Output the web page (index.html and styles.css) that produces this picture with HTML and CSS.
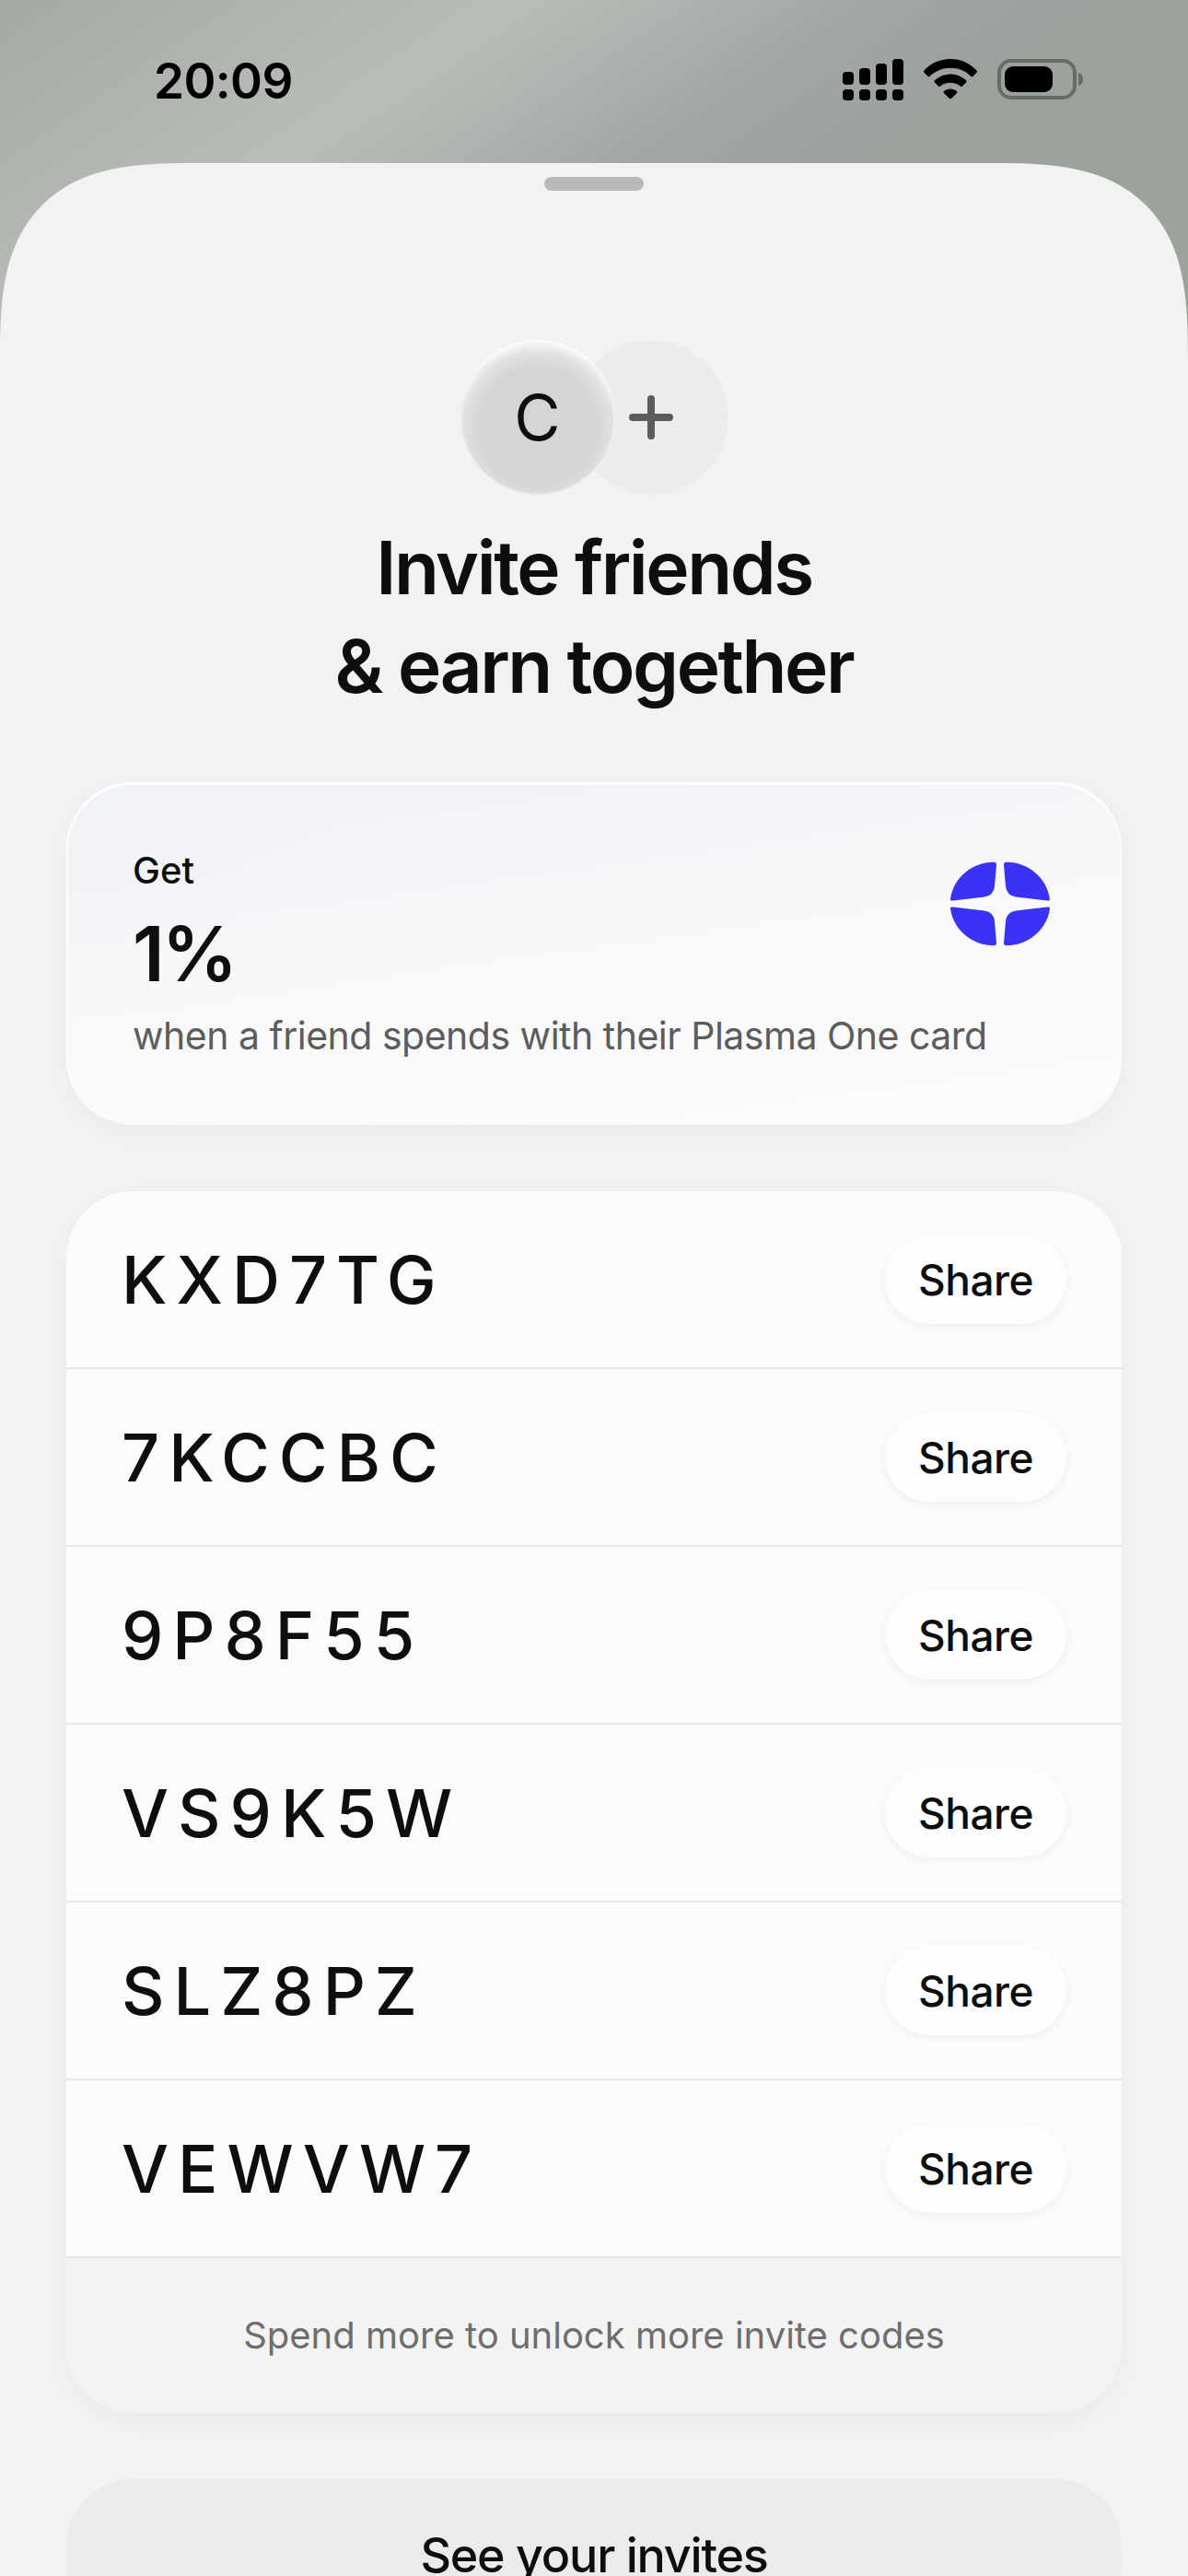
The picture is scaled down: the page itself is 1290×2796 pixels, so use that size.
FILE: index.html
```html
<!DOCTYPE html>
<html lang="en">
<head>
<meta charset="utf-8">
<title>Invite friends</title>
<link rel="stylesheet" href="styles.css">
</head>
<body>
<div class="screen">
  <header class="status">
    <span class="time">20:09</span>
    <div class="status-icons">
      <svg class="signal" width="66" height="46" viewBox="0 0 66 46" fill="#000">
        <rect x="0" y="14" width="12" height="14" rx="4"/><rect x="18" y="10" width="12" height="18" rx="4"/><rect x="36" y="5" width="12" height="23" rx="4"/><rect x="54" y="0" width="12" height="28" rx="4"/>
        <rect x="0" y="33" width="12" height="12" rx="4"/><rect x="18" y="33" width="12" height="12" rx="4"/><rect x="36" y="33" width="12" height="12" rx="4"/><rect x="54" y="33" width="12" height="12" rx="4"/>
      </svg>
      <svg class="wifi" width="58" height="43" viewBox="0 0 58 43" fill="#000">
        <path d="M29 0C40 0 50 4.500 57.500 12.500Q58.500 13.600 57.500 14.700L53.500 18.700Q52.400 19.800 51.200 18.700C45.500 13 37.500 9.800 29 9.800S12.500 13 6.800 18.700Q5.600 19.800 4.500 18.700L.5 14.700Q-.5 13.600 .5 12.500C8 4.500 18 0 29 0Z"/>
        <path d="M29 16.500C35.500 16.500 41.500 19 46 23.300Q47 24.300 46 25.400L42 29.400Q41 30.400 39.800 29.500C36.800 27 33 25.800 29 25.800S21.200 27 18.200 29.500Q17 30.400 16 29.400L12 25.400Q11 24.300 12 23.300C16.500 19 22.500 16.500 29 16.500Z"/>
        <path d="M29 32.500C31.700 32.500 34.200 33.400 36 35Q37 36 36 37L30.500 42.400Q29 43.400 27.500 42.400L22 37Q21 36 22 35C23.800 33.400 26.300 32.500 29 32.500Z"/>
      </svg>
      <svg class="battery" width="94" height="44" viewBox="0 0 94 44">
        <rect x="2" y="2" width="82" height="40" rx="13" fill="none" stroke="#686c67" stroke-width="4"/>
        <rect x="8" y="8" width="52" height="28" rx="9" fill="#000"/>
        <path d="M88 15Q93 16 93 22T88 29Z" fill="#686c67"/>
      </svg>
    </div>
  </header>

  <main class="sheet">
    <div class="handle"></div>

    <div class="avatars">
      <div class="avatar avatar-user">C</div>
      <div class="avatar avatar-add">
        <svg width="48" height="48" viewBox="0 0 48 48" fill="none" stroke="#5c5c5c" stroke-width="8" stroke-linecap="round"><path d="M24 4V44M4 24H44"/></svg>
      </div>
    </div>

    <h1 class="title">Invite friends<br>&amp; earn together</h1>

    <section class="reward card">
      <div class="reward-text">
        <div class="reward-get">Get</div>
        <div class="reward-value">1%</div>
        <div class="reward-desc">when a friend spends with their Plasma One card</div>
      </div>
      <svg class="logo" width="110" height="92" viewBox="0 0 108 92" fill="#3a32f5">
        <path d="M0 41C3 18 23 1 47 .7Q50 .5 50 3.500L48 27Q47 37 37 38.500L3 42.500Q-.5 43 0 41Z"/>
        <path transform="matrix(-1 0 0 1 108 0)" d="M0 41C3 18 23 1 47 .7Q50 .5 50 3.500L48 27Q47 37 37 38.500L3 42.500Q-.5 43 0 41Z"/>
        <path transform="matrix(1 0 0 -1 0 92)" d="M0 41C3 18 23 1 47 .7Q50 .5 50 3.500L48 27Q47 37 37 38.500L3 42.500Q-.5 43 0 41Z"/>
        <path transform="matrix(-1 0 0 -1 108 92)" d="M0 41C3 18 23 1 47 .7Q50 .5 50 3.500L48 27Q47 37 37 38.500L3 42.500Q-.5 43 0 41Z"/>
      </svg>
    </section>

    <section class="codes card">
      <div class="code-row"><span class="code">KXD7TG</span><button class="share">Share</button></div>
      <div class="code-row"><span class="code">7KCCBC</span><button class="share">Share</button></div>
      <div class="code-row"><span class="code">9P8F55</span><button class="share">Share</button></div>
      <div class="code-row"><span class="code">VS9K5W</span><button class="share">Share</button></div>
      <div class="code-row"><span class="code">SLZ8PZ</span><button class="share">Share</button></div>
      <div class="code-row"><span class="code">VEWVW7</span><button class="share">Share</button></div>
      <div class="codes-foot">Spend more to unlock more invite codes</div>
    </section>

    <button class="see-invites">See your invites</button>
  </main>
</div>
</body>
</html>
```

FILE: styles.css
```css
* { box-sizing: border-box; }
html, body { margin: 0; padding: 0; }
body {
  width: 1290px;
  height: 2796px;
  overflow: hidden;
  font-family: Inter, "Liberation Sans", sans-serif;
  color: #0e0e0e;
}
.screen {
  height: 2796px;
  overflow: hidden;
  background: linear-gradient(146deg, #a4a9a2 0%, #b8bdb8 30%, #a1a8a3 50%, #9ba29d 62%, #9ca499 100%) 0 0 / 1290px 400px no-repeat #f2f2f2;
}
.status {
  height: 177px;
  padding: 56px 113px 0 167px;
  display: flex;
  justify-content: space-between;
  align-items: flex-start;
}
.time {
  font-size: 53px;
  line-height: 64px;
  font-weight: 600;
  letter-spacing: -.6px;
  color: #000;
}
.status-icons {
  display: flex;
  align-items: flex-start;
  gap: 22px;
  padding-top: 8px;
}
.sheet {
  height: 2619px;
  background: #f2f2f2;
  border-radius: 210px 210px 0 0;
  corner-shape: superellipse(1.5);
  padding: 15px 72px 0;
  display: flex;
  flex-direction: column;
  align-items: stretch;
}
.sheet > * { flex: none; }
.handle {
  width: 108px;
  height: 15px;
  border-radius: 8px;
  background: #b9b9bb;
  align-self: center;
}
.avatars {
  display: flex;
  justify-content: center;
  margin-top: 162px;
}
.avatar {
  flex: none;
  width: 168px;
  height: 168px;
  border-radius: 50%;
  display: flex;
  align-items: center;
  justify-content: center;
}
.avatar-user {
  z-index: 1;
  font-size: 69px;
  font-weight: 400;
  background: radial-gradient(circle farthest-side at 50% 56%, #d5d5d5 0, #d5d5d5 68%, #e0e0e0 85%, #fdfdfd 100%);
  box-shadow: inset 0 0 3px #fff;
}
.avatar-add {
  margin-left: -45px;
  background: #ececec;
}
.title {
  margin: 25px 0 0;
  text-align: center;
  font-size: 80px;
  line-height: 107px;
  font-weight: 600;
  letter-spacing: -2.4px;
}
.card {
  border-radius: 72px;
  box-shadow: 0 8px 30px rgba(0,0,0,.035);
}
.reward {
  margin-top: 73px;
  height: 372px;
  padding: 69px 40px 0 70px;
  display: flex;
  justify-content: space-between;
  align-items: flex-start;
  background:
    radial-gradient(ellipse 300px 180px at 0 0, #f1f4f7 0%, rgba(241,244,247,0) 100%),
    linear-gradient(172deg, #f1f0f4 0%, #f5f4f8 25%, #f9f9fa 55%, #fbfbfb 100%);
  border-top: 3px solid #fff;
  border-left: 2px solid #fdfdfd;
  border-right: 2px solid #fdfdfd;
}
.reward-text {
  width: 800px;
}
.reward-get {
  font-size: 40px;
  line-height: 48px;
  font-weight: 500;
  color: #0e0e0e;
}
.reward-value {
  margin-top: 17px;
  font-size: 82px;
  line-height: 100px;
  font-weight: 600;
  letter-spacing: -3px;
}
.reward-desc {
  margin-top: 13px;
  font-size: 41px;
  line-height: 50px;
  letter-spacing: -.5px;
  color: #5c5c5c;
  white-space: nowrap;
}
.logo {
  flex: none;
  margin: 14px 35px 0 0;
}
.codes {
  margin-top: 72px;
  height: 1326px;
  background: #f3f3f3;
  overflow: hidden;
}
.code-row {
  height: 193px;
  padding: 0 60px 0 60px;
  display: flex;
  align-items: center;
  justify-content: space-between;
  background: #fbfbfb;
  border-bottom: 2px solid #e8e8e8;
}
.code {
  font-size: 72px;
  font-weight: 500;
  letter-spacing: 10px;
}
.share {
  width: 197px;
  height: 97px;
  border: 0;
  border-radius: 49px;
  background: #fdfdfd;
  box-shadow: 0 3px 10px rgba(0,0,0,.05);
  font-family: inherit;
  font-size: 46px;
  font-weight: 500;
  color: #0e0e0e;
  letter-spacing: -.5px;
}
.codes-foot {
  height: 166px;
  display: flex;
  align-items: center;
  justify-content: center;
  font-size: 40px;
  color: #6e6e6e;
}
.see-invites {
  margin-top: 72px;
  height: 165px;
  border: 0;
  border-radius: 72px;
  background: #ebebeb;
  font-family: inherit;
  font-size: 52px;
  font-weight: 500;
  letter-spacing: -1.2px;
  color: #0e0e0e;
}
```
